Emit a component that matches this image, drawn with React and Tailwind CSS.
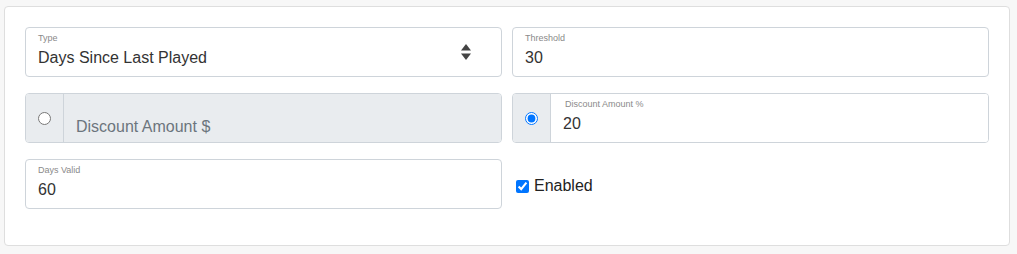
import React from "react";

function FloatField({ label, value, children }) {
  return (
    <div className="relative flex h-[50px] rounded border border-[#ced4da] bg-white">
      <div className="flex flex-1 flex-col px-3 pt-[5px]">
        <span className="text-[9px] leading-[11px] text-[#8a8a8a]">{label}</span>
        <span className="mt-[3px] text-[16px] leading-[22px] text-[#333]">{value}</span>
      </div>
      {children}
    </div>
  );
}

function SelectArrows() {
  return (
    <div className="flex w-[70px] items-center justify-center">
      <svg width="12" height="18" viewBox="0 0 12 18" className="text-[#444]">
        <path d="M6 1 L11 7.5 L1 7.5 Z" fill="currentColor" />
        <path d="M6 17 L11 10.5 L1 10.5 Z" fill="currentColor" />
      </svg>
    </div>
  );
}

function RadioField({ label, value, placeholder, checked }) {
  return (
    <div className="flex h-[50px] overflow-hidden rounded border border-[#ced4da]">
      <div className="flex w-[38px] shrink-0 items-center justify-center border-r border-[#ced4da] bg-[#e9ecef]">
        <input
          type="radio"
          name="discount"
          defaultChecked={checked}
          className="m-0 h-[13px] w-[13px] accent-[#0075ff]"
        />
      </div>
      {placeholder ? (
        <div className="flex flex-1 flex-col bg-[#e9ecef] px-3 pt-[5px]">
          <span className="h-[11px]" />
          <span className="mt-[6px] text-[16px] leading-[22px] text-[#6c757d]">{placeholder}</span>
        </div>
      ) : (
        <div className="flex flex-1 flex-col bg-white px-3 pt-[5px]">
          <span className="pl-[2px] text-[9px] leading-[11px] text-[#8a8a8a]">{label}</span>
          <span className="mt-[3px] text-[16px] leading-[22px] text-[#333]">{value}</span>
        </div>
      )}
    </div>
  );
}

export default function App() {
  return (
    <div
      className="min-h-[254px] bg-[#f7f7f7] pl-[4px] pt-[6px]"
      style={{ fontFamily: '"Liberation Sans", Arial, sans-serif' }}
    >
      <div className="w-[1006px] rounded border border-[#dedede] bg-white px-5 pb-[36px] pt-5">
        <div className="grid grid-cols-[477px_477px] gap-x-[10px] gap-y-4">
          <FloatField label="Type" value="Days Since Last Played">
            <SelectArrows />
          </FloatField>
          <FloatField label="Threshold" value="30" />
          <RadioField placeholder="Discount Amount $" />
          <RadioField label="Discount Amount %" value="20" checked />
          <FloatField label="Days Valid" value="60" />
          <label className="flex h-[50px] items-center pl-[4px] pt-[4px]">
            <input
              type="checkbox"
              defaultChecked
              className="m-0 h-[13px] w-[13px] accent-[#0075ff]"
            />
            <span className="ml-[5px] text-[16px] leading-[22px] text-[#222]">Enabled</span>
          </label>
        </div>
      </div>
    </div>
  );
}
